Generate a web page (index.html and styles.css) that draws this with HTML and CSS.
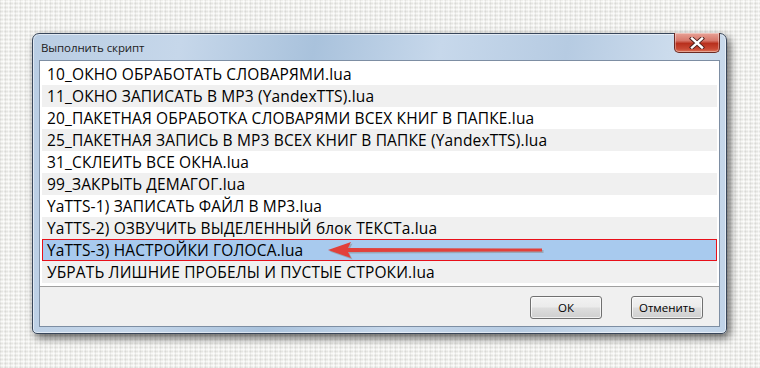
FILE: index.html
```html
<!DOCTYPE html>
<html lang="ru">
<head>
<meta charset="utf-8">
<title>Выполнить скрипт</title>
<link rel="stylesheet" href="styles.css">
</head>
<body>
<div class="window">
  <div class="titlebar">
    <span class="title">Выполнить скрипт</span>
    <button class="close" aria-label="Закрыть">
      <svg width="20" height="12" viewBox="0 0 20 12">
        <path d="M5 1.5 L15 10.5 M15 1.5 L5 10.5" stroke="#4a1e1a" stroke-width="4.2" stroke-linecap="square"/>
        <path d="M5 1.5 L15 10.5 M15 1.5 L5 10.5" stroke="#ffffff" stroke-width="2.4" stroke-linecap="square"/>
      </svg>
    </button>
  </div>
  <div class="client">
    <ul class="list">
      <li class="row">10_ОКНО ОБРАБОТАТЬ СЛОВАРЯМИ.lua</li>
      <li class="row alt">11_ОКНО ЗАПИСАТЬ В MP3 (YandexTTS).lua</li>
      <li class="row">20_ПАКЕТНАЯ ОБРАБОТКА СЛОВАРЯМИ ВСЕХ КНИГ В ПАПКЕ.lua</li>
      <li class="row alt">25_ПАКЕТНАЯ ЗАПИСЬ В MP3 ВСЕХ КНИГ В ПАПКЕ (YandexTTS).lua</li>
      <li class="row">31_СКЛЕИТЬ ВСЕ ОКНА.lua</li>
      <li class="row alt">99_ЗАКРЫТЬ ДЕМАГОГ.lua</li>
      <li class="row">YaTTS-1) ЗАПИСАТЬ ФАЙЛ В MP3.lua</li>
      <li class="row alt">YaTTS-2) ОЗВУЧИТЬ ВЫДЕЛЕННЫЙ блок ТЕКСТа.lua</li>
      <li class="row selected">YaTTS-3) НАСТРОЙКИ ГОЛОСА.lua
        <svg class="arrow" width="220" height="20" viewBox="0 0 220 20">
          <g fill="#8a8a8a" opacity="0.55" transform="translate(1.5,1.5)">
            <path d="M0 9 L23 1 L20 7 L214 7.5 L214 10.5 L20 11 L23 17 Z"/>
          </g>
          <path d="M0 9 L23 1 L20 7 L214 7.5 L214 10.5 L20 11 L23 17 Z" fill="#e2403a"/>
        </svg>
      </li>
      <li class="row alt">УБРАТЬ ЛИШНИЕ ПРОБЕЛЫ И ПУСТЫЕ СТРОКИ.lua</li>
    </ul>
    <div class="footer">
      <button class="btn">ОК</button>
      <button class="btn">Отменить</button>
    </div>
  </div>
</div>
</body>
</html>
```

FILE: styles.css
```css
html, body {
  margin: 0;
  padding: 0;
}
body {
  width: 760px;
  height: 368px;
  overflow: hidden;
  background-color: #efefec;
  background-image:
    repeating-linear-gradient(90deg, rgba(0,0,0,0.05) 0 1px, transparent 1px 3px, rgba(255,255,255,0.5) 3px 4px, transparent 4px 5px),
    repeating-linear-gradient(0deg, rgba(0,0,0,0.045) 0 1px, transparent 1px 2px, rgba(255,255,255,0.6) 2px 3px, transparent 3px 4px);
  font-family: "Open Sans", "Noto Sans", sans-serif;
  padding-top: 33px;
  padding-left: 32px;
  box-sizing: border-box;
}
.window {
  position: relative;
  width: 695px;
  height: 301px;
  box-sizing: border-box;
  border: 1px solid #38465a;
  border-radius: 7px 7px 5px 5px;
  background: linear-gradient(100deg, #b9cde3 0%, #c6d7ea 20%, #a9c2dc 38%, #c7d8eb 55%, #b6cbe2 72%, #cfdeee 88%, #c0d3e8 100%);
  padding: 0 6px 6px 6px;
  display: flex;
  flex-direction: column;
  box-shadow: 3px 4px 8px rgba(0,0,0,0.6), inset 0 0 0 1px rgba(255,255,255,0.55);
}
.titlebar {
  height: 26px;
  display: flex;
  align-items: center;
  flex: none;
}
.title {
  font-family: "Open Sans", "Noto Sans", sans-serif;
  font-size: 11.5px;
  color: #1c1c1c;
  margin-left: 2px;
  margin-top: 1px;
  letter-spacing: -0.1px;
}
.close {
  position: absolute;
  top: -1px;
  right: 6px;
  width: 46px;
  height: 20px;
  padding: 0;
  border: 1px solid #6b2a23;
  border-top: none;
  border-radius: 0 0 5px 5px;
  background: linear-gradient(180deg, #e8a296 0%, #d7776a 40%, #b8301d 55%, #c94a35 85%, #e07a5e 100%);
  box-shadow: inset 0 0 0 1px rgba(255,255,255,0.35);
  display: flex;
  align-items: center;
  justify-content: center;
}
.client {
  flex: 1;
  display: flex;
  flex-direction: column;
  border: 1px solid #7d8ea3;
  background: #f0f0f0;
}
.list {
  list-style: none;
  margin: 0;
  padding: 2px 2px 3px 2px;
  background: #ffffff;
  border-bottom: 1px solid #a0a0a0;
  flex: none;
}
.row {
  position: relative;
  height: 22px;
  line-height: 22px;
  padding-left: 5px;
  font-size: 15.5px;
  letter-spacing: 0.15px;
  color: #000;
  white-space: nowrap;
  box-sizing: border-box;
}
.alt {
  background: #f0f0f0;
}
.selected {
  background: #a8caee;
  border: 1px solid #e8101a;
  line-height: 20px;
  padding-left: 4px;
}
.arrow {
  position: absolute;
  left: 285px;
  top: 1px;
}
.footer {
  flex: 1;
  display: flex;
  justify-content: flex-end;
  align-items: center;
  gap: 29px;
  padding-right: 16px;
}
.btn {
  width: 72px;
  height: 23px;
  box-sizing: border-box;
  border: 1px solid #707070;
  border-radius: 3px;
  background: linear-gradient(180deg, #f2f2f2 0%, #ebebeb 48%, #dddddd 52%, #cfcfcf 100%);
  box-shadow: inset 0 0 0 1px rgba(255,255,255,0.7);
  font-family: "Open Sans", "Noto Sans", sans-serif;
  font-size: 11.5px;
  color: #000;
  padding: 0;
  margin-top: 2px;
}
```
